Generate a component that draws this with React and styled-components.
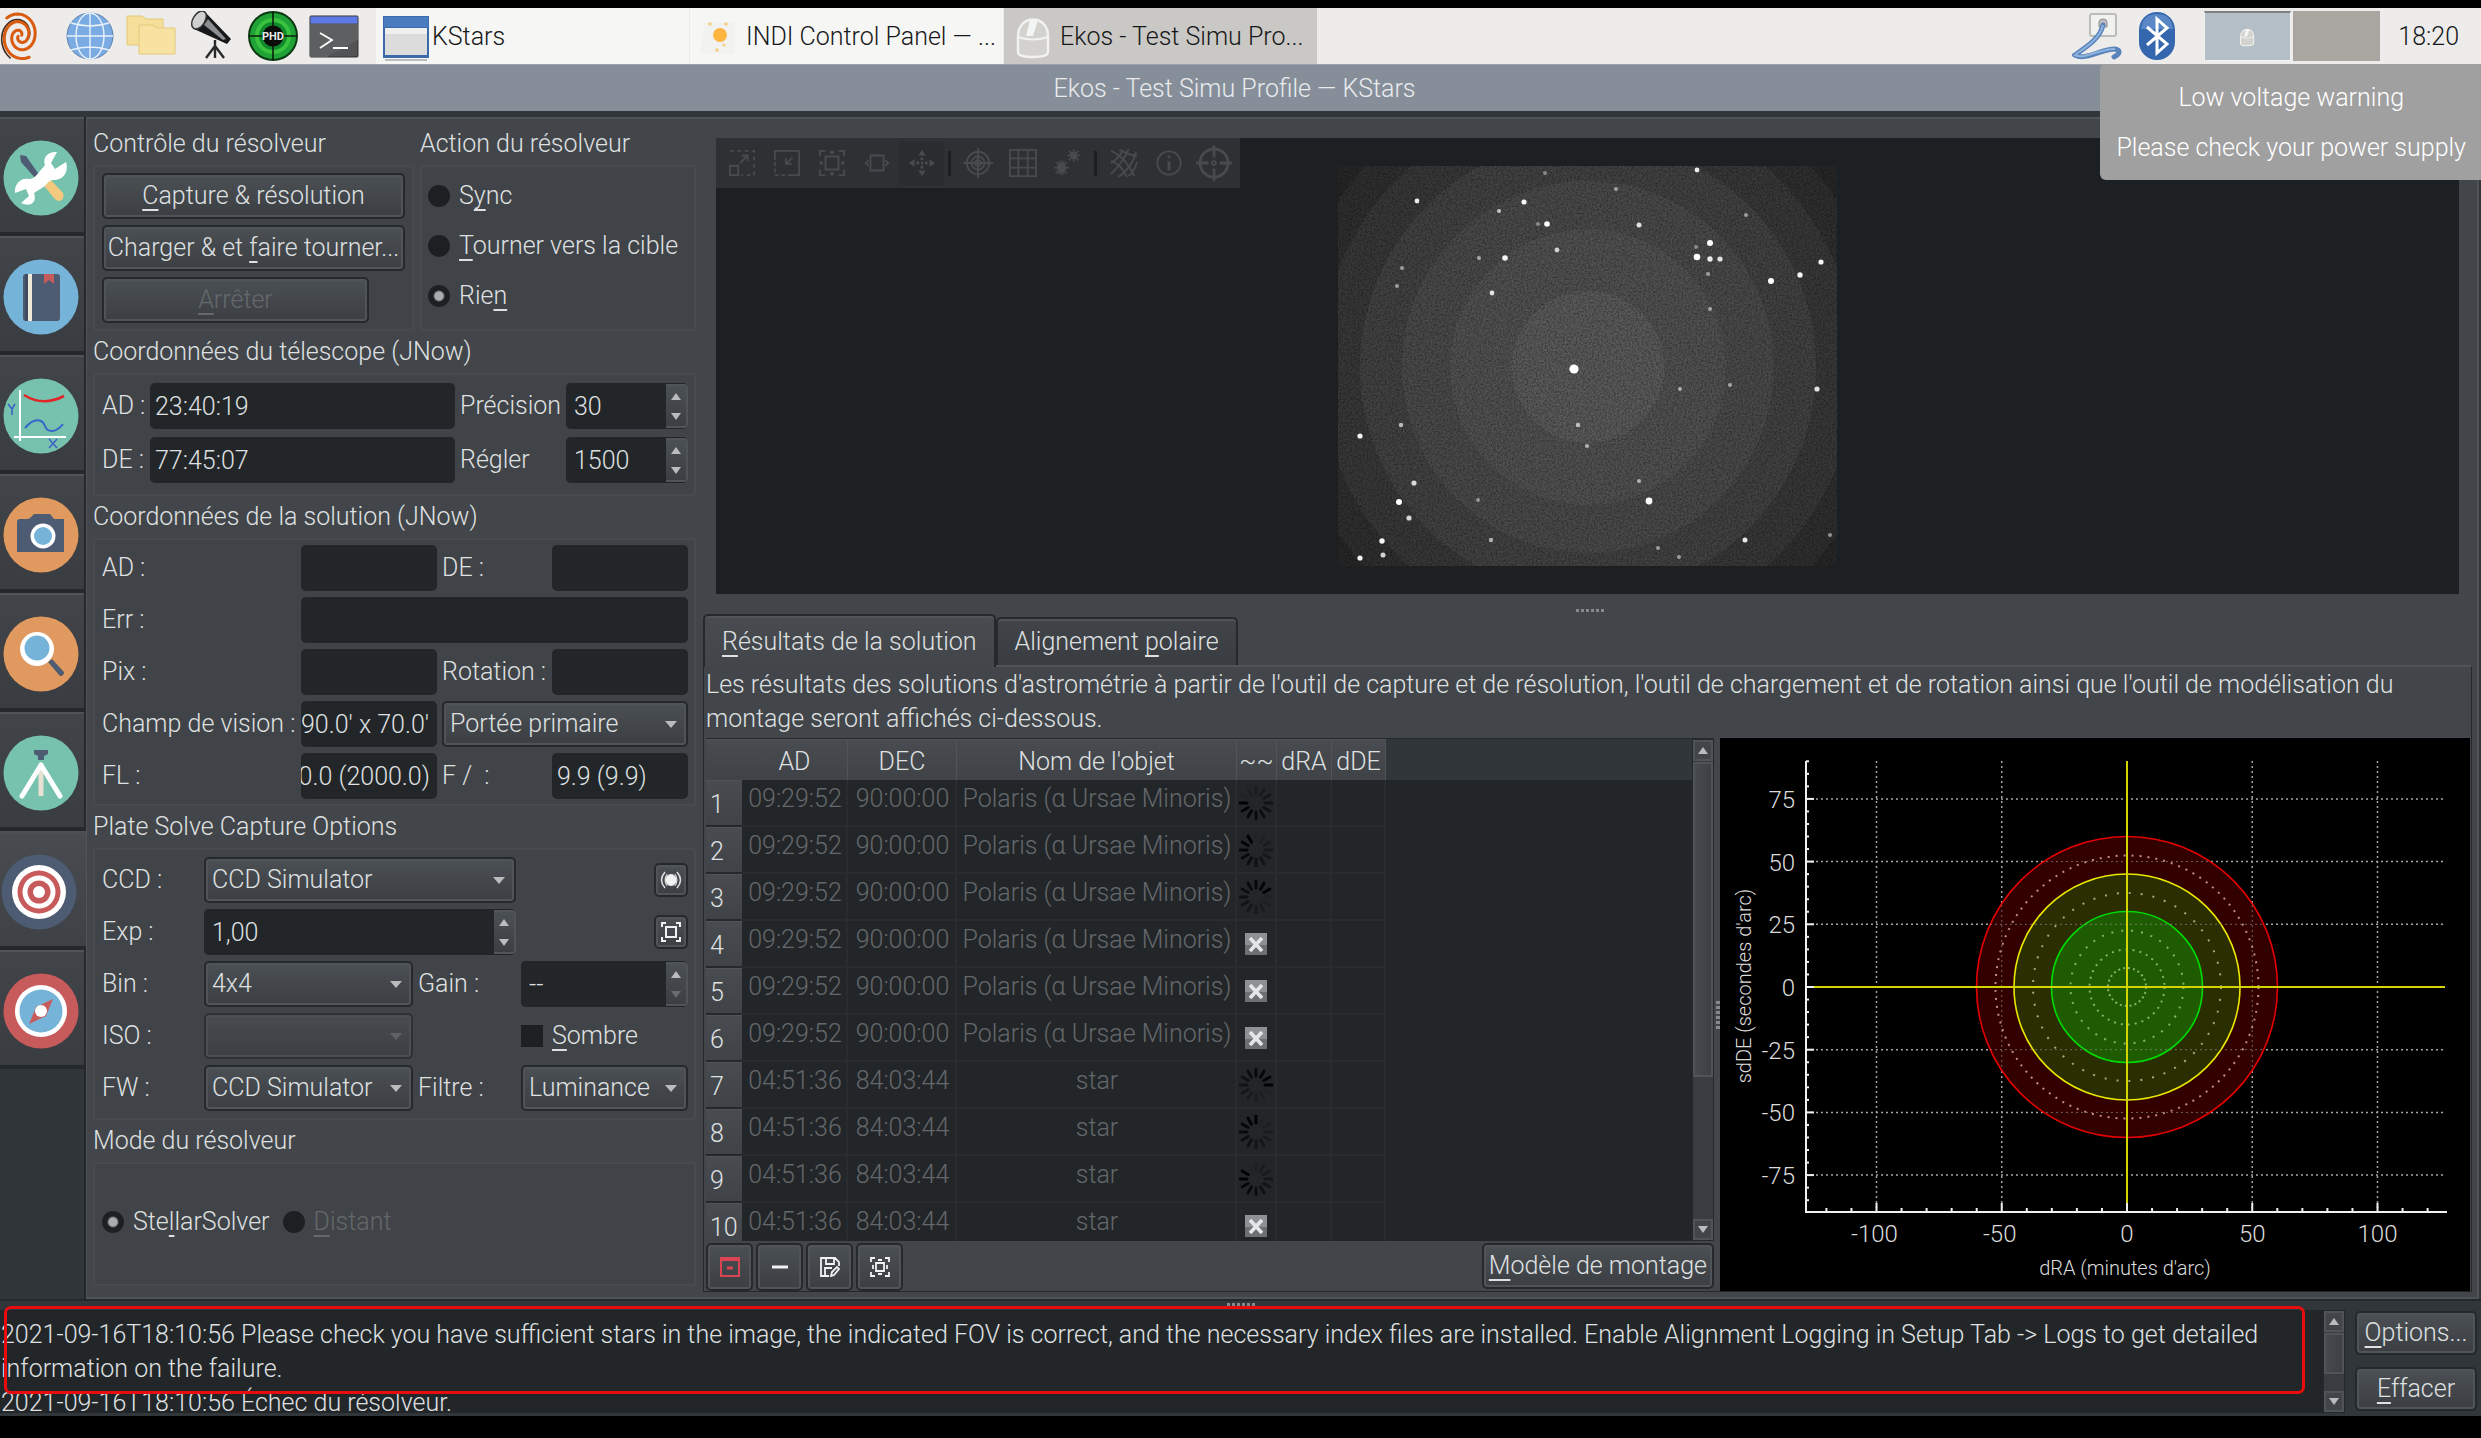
import React, { useEffect, useRef } from "react";
import styled, { createGlobalStyle, css } from "styled-components";

const COLORS = {
	window: "#31363b",
	panel: "#424549",
	field: "#232629",
	edge: "#26292c",
	light: "#505458",
	text: "#dfe0e1",
	dim: "#64686b",
};

const LOG_LINES = [
	"2021-09-16T18:10:56 Please check you have sufficient stars in the image, the indicated FOV is correct, and the necessary index files are installed. Enable Alignment Logging in Setup Tab -> Logs to get detailed information on the failure.",
	"2021-09-16T18:10:56 Échec du résolveur.",
];

// state: clock angle of the darkest spinner bar, or "failed"
const POLARIS = ["09:29:52", "90:00:00", "Polaris (α Ursae Minoris)"];
const STAR = ["04:51:36", "84:03:44", "star"];
const SOLUTIONS = [
	{ cells: POLARIS, state: 270 },
	{ cells: POLARIS, state: 330 },
	{ cells: POLARIS, state: 60 },
	{ cells: POLARIS, state: "failed" },
	{ cells: POLARIS, state: "failed" },
	{ cells: POLARIS, state: "failed" },
	{ cells: STAR, state: 90 },
	{ cells: STAR, state: 0 },
	{ cells: STAR, state: 300 },
	{ cells: STAR, state: "failed" },
];

// x, y, radius, opacity
const STARS = [
	[207, 7, 2, 0.4], [359, 4, 2.4, 0.9], [278, 23, 2, 0.5], [79, 35, 2.4, 0.9],
	[186, 36, 2.6, 0.95], [161, 45, 2, 0.7], [200, 58, 2, 0.4], [209, 58, 2.8, 1],
	[301, 59, 2.5, 0.85], [408, 49, 2, 0.5], [372, 77, 3, 1], [358, 81, 2, 0.4],
	[359, 91, 3.3, 1], [372, 93, 2.7, 0.9], [382, 93, 2.6, 0.85], [483, 96, 2.6, 0.95],
	[219, 84, 2.4, 0.75], [141, 92, 2, 0.55], [167, 92, 2.8, 0.95], [64, 102, 2, 0.5],
	[59, 120, 2, 0.5], [154, 127, 2.4, 0.85], [370, 108, 2, 0.5], [462, 109, 2.7, 0.95],
	[433, 115, 3, 1], [372, 143, 2, 0.5], [236, 203, 4.6, 1], [342, 223, 2, 0.55],
	[392, 219, 2, 0.55], [479, 223, 2.6, 0.85], [240, 259, 2.2, 0.65], [249, 280, 2, 0.6],
	[63, 259, 2.2, 0.65], [22, 270, 2.6, 0.95], [76, 317, 2.6, 0.8], [61, 336, 3, 1],
	[140, 334, 2, 0.45], [71, 352, 2.6, 0.8], [301, 315, 2, 0.6], [311, 335, 3.4, 1],
	[44, 375, 2.7, 0.95], [45, 389, 2.5, 0.8], [22, 392, 2.6, 0.95], [153, 374, 2.2, 0.6],
	[320, 382, 2, 0.5], [341, 391, 2, 0.5], [407, 374, 2.5, 0.9], [492, 369, 2, 0.5],
];

const HALO = [
	[300, "#2f2f2f"],
	[268, "#383838"],
	[228, "#424242"],
	[186, "#4a4a4a"],
	[138, "#515151"],
	[76, "#5a5a5a"],
];

/* ---------- icons ---------- */

const spiral = (start, turns, reach) =>
	Array.from({ length: 40 }, (_, i) => {
		const t = i / 39;
		const angle = start + t * turns * 2 * Math.PI;
		const r = 2 + reach * t;
		return `${(20 + r * 0.92 * Math.cos(angle)).toFixed(1)},${(25 - r * 1.08 * Math.sin(angle)).toFixed(1)}`;
	}).join(" ");

const SwirlIcon = () => (
	<svg width="44" height="50" viewBox="0 0 44 50" fill="none" strokeLinecap="round">
		<polyline points={spiral(3.6, 1.1, 21)} stroke="#3b2a22" strokeWidth="1.600" />
		<polyline points={spiral(0.4, 1.3, 20)} stroke="#d95b10" strokeWidth="3" />
		<polyline points={spiral(3.3, 1.3, 20)} stroke="#d95b10" strokeWidth="3" />
	</svg>
);

const GlobeIcon = () => (
	<svg width="50" height="50" viewBox="0 0 50 50">
		<circle cx="25" cy="25" r="23" fill="#7aabe3" stroke="#5c80ac" />
		<g fill="none" stroke="#e9f2fb" strokeWidth="1.4">
			<path d="M25 2v46M2 25h46M6 12q19 6 38 0M6 39q19-6 38 0" />
			<ellipse cx="25" cy="25" rx="14" ry="23" />
		</g>
	</svg>
);

const FolderIcon = () => (
	<svg width="50" height="50" viewBox="0 0 50 50" stroke="#e2c878">
		<path d="M1 5h15l4 3h17v26H1z" fill="#f6df9b" />
		<path d="M13 14h14l4 3h18v26H13z" fill="#f8e2a2" />
	</svg>
);

const TelescopeIcon = () => (
	<svg width="50" height="50" viewBox="0 0 50 50">
		<path d="M18 1l26 27-4 5L7 18z" fill="#17181a" />
		<path d="M21 8l18 20-3 1-19-15z" fill="#8c8f91" />
		<ellipse cx="12" cy="9" rx="6" ry="10" transform="rotate(32 12 9)" fill="#cfd0cf" stroke="#333" strokeWidth="1.5" />
		<path d="M28 29v8M28 35l-9 12M28 35l9 12M28 37v10" stroke="#2a2a2a" strokeWidth="2.4" fill="none" />
	</svg>
);

const PhdIcon = () => (
	<svg width="50" height="50" viewBox="0 0 50 50">
		<circle cx="25" cy="25" r="24" fill="#1fa336" stroke="#0c3812" strokeWidth="2" />
		<circle cx="25" cy="25" r="18" fill="#39c23e" />
		<circle cx="25" cy="25" r="14" fill="#128a2c" />
		<path d="M25 1v48M1 25h48" stroke="#0b1c0d" strokeWidth="1.6" />
		<circle cx="25" cy="25" r="10.5" fill="#0b0d0b" />
		<text x="25" y="29" fontSize="11" fontWeight="700" fontFamily="Roboto, sans-serif" textAnchor="middle" fill="#e8ece8">PHD</text>
	</svg>
);

const TerminalIcon = () => (
	<svg width="50" height="50" viewBox="0 0 50 50">
		<rect x="1" y="5" width="48" height="41" rx="1" fill="#525354" stroke="#2f3031" />
		<path d="M49 13v16L18 46H1V13z" fill="#5e5f60" />
		<rect x="1.500" y="5.500" width="47" height="7" fill="#5d79e6" />
		<path d="M11 22l12 7-12 8M24 37h15" fill="none" stroke="#fff" strokeWidth="1.8" />
	</svg>
);

const WindowIcon = () => (
	<svg width="50" height="50" viewBox="0 0 50 50">
		<rect x="1" y="4" width="46" height="42" fill="#3b6bab" />
		<rect x="2" y="5" width="44" height="10" fill="#4a7dc0" />
		<rect x="3" y="16" width="42" height="27" fill="#dcdcdc" />
		<rect x="3" y="16" width="42" height="6" fill="#efefef" />
		<path d="M3 48h42" stroke="#b9bbbd" strokeWidth="2" />
	</svg>
);

const IndiIcon = () => (
	<svg width="50" height="50" viewBox="0 0 50 50">
		<path d="M9 10h30v32H3z" fill="#f2f2f0" />
		<ellipse cx="24" cy="23" rx="7" ry="7" fill="#fbb540" />
		<g fill="#f8cf83">
			<circle cx="14" cy="12" r="1.800" />
			<circle cx="30" cy="12" r="1.800" />
			<circle cx="28" cy="33" r="1.600" />
			<circle cx="21" cy="38" r="1.800" />
		</g>
	</svg>
);

const MouseIcon = ({ size = 50 }) => (
	<svg width={size} height={size} viewBox="0 0 50 50">
		<path d="M8 24C8 2 38 2 38 24v16q0 5-15 5T8 40z" fill="#d3d2ce" stroke="#f2f2f1" strokeWidth="2.4" />
		<path d="M8 25q15 5 30 0" fill="none" stroke="#f2f2f1" strokeWidth="2" />
		<path d="M20 8h8l-5 16h-7z" fill="#f4f5f5" />
	</svg>
);

const NetworkIcon = () => (
	<svg width="50" height="50" viewBox="0 0 50 50" fill="none">
		<rect x="18" y="3" width="26" height="22" rx="2" fill="#f1f1ef" stroke="#bcbcb9" strokeWidth="2" />
		<path d="M27 16v-5q0-3 4-3t4 3v5z" fill="#bdbdbb" stroke="#8e8e8c" />
		<path d="M31 14C28 28 14 36 3 44c10 6 26-6 40-6 6 1 5 5-1 8" stroke="#5984bb" strokeWidth="5" strokeLinecap="round" />
		<path d="M31 14C28 28 14 36 3 44c10 5 26-7 40-6" stroke="#8fb3de" strokeWidth="2" />
	</svg>
);

const BluetoothIcon = () => (
	<svg width="38" height="50" viewBox="0 0 38 50">
		<rect x="1" y="1" width="36" height="48" rx="18" fill="#3467ae" />
		<path d="M3 18C4 6 12 3 19 3s15 3 16 15z" fill="#5a88c6" />
		<path d="M9 16l20 17-10 9V8l10 9L9 34" fill="none" stroke="#fff" strokeWidth="3" />
	</svg>
);

const ModuleIcon = ({ bg, children }) => (
	<svg width="76" height="76" viewBox="0 0 76 76">
		<circle cx="38" cy="38" r="37.500" fill={bg} />
		{children}
	</svg>
);

const MODULES = [
	{
		name: "Setup",
		bg: "#77c2ae",
		art: (
			<>
				<path d="M17 15l6 1 14 20-4 3-15-17z" fill="#4d5b73" />
				<path d="M38 42l7-5 15 16q2 5-3 8-4 0-6-3z" fill="#f3ca7d" />
				<path d="M54 12l-6 11 4 6 11-7c3 9-2 18-12 18-4 0-6 2-9 6L31 53c3 8-2 15-13 10l8-7-3-7-11 4c-1-8 5-16 14-14 5 0 7-3 16-14-3-8 4-14 12-13z" fill="#fff" />
			</>
		),
	},
	{
		name: "Scheduler",
		bg: "#76b3d8",
		art: (
			<>
				<rect x="20" y="15" width="37" height="47" rx="3" fill="#4d5b73" />
				<path d="M22 15h3v47h-3z" fill="#3f4b60" />
				<path d="M25 15h4v47h-4z" fill="#eee9d6" />
				<path d="M41 15h10v10l-5-4-5 4z" fill="#c75b5c" />
			</>
		),
	},
	{
		name: "Analyze",
		bg: "#77c2ae",
		art: (
			<g fill="none">
				<path d="M17 12v51M11 59h52" stroke="#fff" strokeWidth="2" />
				<path d="M21 17q19 12 40 1" stroke="#e02626" strokeWidth="2.6" />
				<path d="M22 50c10-12 18-8 20-2s10 8 18-2" stroke="#3565c8" strokeWidth="2" />
				<path d="M5 26l4 5 3-5M9 31v6M46 61l8 9M54 61l-8 9" stroke="#3f63c4" strokeWidth="1.6" />
			</g>
		),
	},
	{
		name: "Capture",
		bg: "#e0995e",
		art: (
			<>
				<path d="M14 25q0-3 3-3h7q3 0 4-2l3-3h16l4 5h10v33H14z" fill="#4d5b73" />
				<circle cx="40" cy="39" r="12.500" fill="#fff" />
				<circle cx="40" cy="39" r="9" fill="#76b3d8" />
			</>
		),
	},
	{
		name: "Focus",
		bg: "#e0995e",
		art: (
			<>
				<path d="M45 46l4-3 12 13q0 4-4 4z" fill="#4d5b73" />
				<circle cx="34" cy="33" r="17" fill="#fff" />
				<circle cx="34" cy="32" r="12.500" fill="#76b3d8" />
			</>
		),
	},
	{
		name: "Mount",
		bg: "#77c2ae",
		art: (
			<>
				<path d="M31 15h14v4l-4 2v4h-6v-4l-4-2z" fill="#4d5b73" />
				<path d="M38 35v26" stroke="#e6e1d3" strokeWidth="5" />
				<path d="M19 61l19-31 19 31" fill="none" stroke="#fff" strokeWidth="5" strokeLinecap="round" strokeLinejoin="round" />
			</>
		),
	},
	{
		name: "Align",
		bg: "#4d5b73",
		art: (
			<>
				<circle cx="38" cy="38" r="27" fill="#fff" />
				<circle cx="38" cy="38" r="21.500" fill="#c75b5c" />
				<circle cx="38" cy="38" r="16.500" fill="#fff" />
				<circle cx="38" cy="38" r="11.500" fill="#c75b5c" />
				<circle cx="38" cy="38" r="6" fill="#fff" />
			</>
		),
	},
	{
		name: "Guide",
		bg: "#c75b5c",
		art: (
			<>
				<circle cx="38" cy="38" r="26" fill="#fff" />
				<circle cx="38" cy="38" r="21.500" fill="#76b3d8" />
				<path d="M50 26l-7 17-17 8 7-17z" fill="#c75b5c" />
				<circle cx="38" cy="38" r="6" fill="#fff" />
			</>
		),
	},
];

const TOOL_ART = {
	"Zoom in": (
		<>
			<path d="M2 2h26v26H14" strokeDasharray="4 4" />
			<path d="M2 18h9v10H2zM13 15l8-8M15 7h6v6" />
		</>
	),
	"Zoom out": (
		<>
			<path d="M2 12V2h26v26H16" />
			<path d="M2 14v14h12" strokeDasharray="4 3" />
			<path d="M21 9l-7 7M14 10v6h6" />
		</>
	),
	"Default zoom": (
		<>
			<path d="M2 8V2h6M22 2h6v6M28 22v6h-6M8 28H2v-6M8 8h14v14H8z" />
			<path d="M15 2v3M15 25v3M2 15h3M25 15h3" strokeWidth="4" />
		</>
	),
	"Zoom to fit": (
		<>
			<path d="M8 7h14v16H8z" />
			<path d="M6 12l-3 3 3 3M24 12l3 3-3 3" />
		</>
	),
	Pan: (
		<>
			<path d="M15 1l4 6h-8zM15 29l4-6h-8zM1 15l6-4v8zM29 15l-6-4v8z" fill="currentColor" stroke="none" />
			<path d="M9 15h3M14 15h2M18 15h3M15 9v3M15 18v3" strokeWidth="3" />
		</>
	),
	Crosshairs: (
		<>
			<circle cx="15" cy="15" r="12" />
			<circle cx="15" cy="15" r="7" />
			<circle cx="15" cy="15" r="3" />
			<path d="M15-1v32M-1 15h32" />
		</>
	),
	Grid: <path d="M1 1h28v28H1zM10 1v28M20 1v28M1 10h28M1 20h28" />,
	Stars: (
		<>
			<circle cx="8" cy="20" r="5" fill="currentColor" stroke="none" />
			<path d="M8 12v16M0 20h16M2 14l12 12M14 14L2 26M5 13l6 14M11 13L5 27" strokeWidth="1.600" />
			<circle cx="21" cy="7" r="4" fill="currentColor" stroke="none" />
			<path d="M21 0v14M14 7h14M16 2l10 10M26 2L16 12" strokeWidth="1.600" />
		</>
	),
	"Equatorial grid": <path d="M1 2Q16 8 26 29M1 13Q12 16 18 30M10 1Q20 6 29 8M20 0Q14 14 1 27M28 3Q24 20 9 30M14 1Q10 10 1 15M29 14Q26 24 20 29" />,
	Objects: (
		<>
			<circle cx="15" cy="15" r="12.500" />
			<path d="M15 13v10M15 7v3" strokeWidth="3" />
		</>
	),
	Center: (
		<>
			<circle cx="15" cy="15" r="15" strokeWidth="3" />
			<path d="M15-4v13M15 21v13M-4 15H9M21 15h13" strokeWidth="3" />
			<circle cx="15" cy="15" r="2" />
		</>
	),
};

const VIEW_TOOLS = [
	"Zoom in", "Zoom out", "Default zoom", "Zoom to fit", "Pan", null,
	"Crosshairs", "Grid", "Stars", null,
	"Equatorial grid", "Objects", "Center",
];

const ToolIcon = ({ name }) => (
	<svg width="28" height="28" viewBox="0 0 30 30" fill="none" stroke="currentColor" strokeWidth="2" overflow="visible">
		{TOOL_ART[name]}
	</svg>
);

const Spinner = ({ head }) => (
	<svg width="34" height="34" viewBox="-17 -17 34 34" role="img" aria-label="En cours">
		{Array.from({ length: 12 }, (_, i) => (
			<path
				key={i}
				d="M0-9v-7"
				stroke="#000"
				strokeWidth="3"
				strokeLinecap="round"
				opacity={1 - i * 0.085}
				transform={`rotate(${head - i * 30})`}
			/>
		))}
	</svg>
);

const FailedIcon = () => (
	<svg width="22" height="22" viewBox="0 0 22 22" role="img" aria-label="Échec">
		<rect width="22" height="22" fill="#8d9195" />
		<rect y="12" width="22" height="10" fill="#6c7073" />
		<path d="M5 5l12 13M17 5L5 18" stroke="#e4e6e8" strokeWidth="3.600" />
	</svg>
);

/* ---------- shared controls ---------- */

const GlobalStyle = createGlobalStyle`
	* { box-sizing: border-box; }

	body {
		margin: 0;
		background: #000;
		color: ${COLORS.text};
		font: 300 25px/34px Roboto, "Liberation Sans", sans-serif;
	}

	button, input, select {
		margin: 0;
		font: inherit;
		color: inherit;
	}

	svg { display: block; flex: none; }
`;

const Key = styled.u`
	text-decoration-thickness: 2px;
	text-underline-offset: 5px;
	text-decoration-skip-ink: none;
`;

const raised = css`
	border: 2px solid ${COLORS.edge};
	border-radius: 5px;
	background: linear-gradient(#4b5054, #3b3e43);
	box-shadow: inset 0 0 0 2px ${COLORS.light};
`;

const Button = styled.button`
	${raised}
	height: ${(props) => props.$height || 46}px;
	width: ${(props) => (props.$width ? `${props.$width}px` : "auto")};
	padding: 0 5px;
	display: flex;
	align-items: center;
	justify-content: center;
	white-space: nowrap;

	&:disabled {
		color: ${COLORS.dim};
	}
`;

const Field = styled.input`
	width: 100%;
	min-width: 0;
	height: 46px;
	padding: 0 5px;
	border: 0;
	border-radius: 5px;
	outline: 0;
	background: ${COLORS.field};
	grid-column: ${(props) => props.$column || "auto"};
`;

const ClippedField = styled(Field)`
	padding: 0 7px 0 0;
`;

const TailField = (props) => {
	const ref = useRef(null);

	useEffect(() => {
		ref.current.scrollLeft = ref.current.scrollWidth;
	}, []);

	return <ClippedField ref={ref} {...props} />;
};

const SelectWrapper = styled.span`
	position: relative;
	display: block;
	grid-column: ${(props) => props.$column || "auto"};

	&::after {
		content: "";
		position: absolute;
		right: 11px;
		top: 20px;
		border: 6px solid transparent;
		border-top: 7px solid #b9bbbd;
		opacity: ${(props) => (props.$disabled ? 0.25 : 1)};
		pointer-events: none;
	}

	select {
		${raised}
		appearance: none;
		width: 100%;
		height: 46px;
		padding: 0 24px 0 6px;
	}
`;

const Select = ({ id, value, column, disabled }) => (
	<SelectWrapper $column={column} $disabled={disabled}>
		<select id={id} disabled={disabled} defaultValue={value}>
			<option>{value}</option>
		</select>
	</SelectWrapper>
);

const SpinWrapper = styled.span`
	display: flex;
	height: 46px;
	border-radius: 5px;
	background: ${COLORS.field};
	grid-column: ${(props) => props.$column || "auto"};

	${Field} {
		flex: 1;
		padding-left: 8px;
	}
`;

const SpinButtons = styled.span`
	width: 22px;
	display: flex;
	flex-direction: column;
	margin: 1px 0;
	border: 2px solid ${COLORS.light};
	border-left: 0;
	border-radius: 0 4px 4px 0;
	background: linear-gradient(#4b5054, #3b3e43);

	button {
		flex: 1;
		padding: 0;
		border: 0;
		background: none;
		display: grid;
		place-items: center;
	}

	button:disabled {
		opacity: 0.35;
	}
`;

const Arrow = styled.i`
	border: 5px solid transparent;
	${(props) =>
		props.$up
			? "border-top: 0; border-bottom: 7px solid #b9bbbd;"
			: "border-bottom: 0; border-top: 7px solid #b9bbbd;"}
`;

const Spin = ({ id, value, column, downDisabled }) => (
	<SpinWrapper $column={column}>
		<Field id={id} defaultValue={value} />
		<SpinButtons>
			<button type="button" aria-label="Augmenter">
				<Arrow $up />
			</button>
			<button type="button" aria-label="Diminuer" disabled={downDisabled}>
				<Arrow />
			</button>
		</SpinButtons>
	</SpinWrapper>
);

const ChoiceLabel = styled.label`
	display: flex;
	align-items: center;
	gap: 9px;
	height: 50px;
	color: ${(props) => (props.$disabled ? COLORS.dim : "inherit")};
	grid-column: ${(props) => props.$column || "auto"};

	input {
		appearance: none;
		width: 22px;
		height: 22px;
		background: #1d2023;
	}

	input[type="radio"] {
		border-radius: 50%;
	}

	input:checked {
		background: radial-gradient(circle, #a9abad 0 4px, #1d2023 6px);
	}
`;

const ScrollTrack = styled.div`
	width: 22px;
	display: flex;
	flex-direction: column;
	gap: 1px;
	background: #393c40;
	border: 1px solid ${COLORS.edge};

	button {
		height: 21px;
		padding: 0;
		border: 2px solid ${COLORS.light};
		background: #414448;
		display: grid;
		place-items: center;
	}
`;

const Thumb = styled.div`
	flex: ${(props) => props.$share} 0 0;
	border: 2px solid ${COLORS.light};
	background: linear-gradient(90deg, #46494d, #3d4044);
`;

const Trough = styled.div`
	flex: ${(props) => props.$share} 0 0;
`;

const ScrollBar = ({ thumb }) => (
	<ScrollTrack>
		<button type="button" aria-label="Défiler vers le haut">
			<Arrow $up />
		</button>
		<Thumb $share={thumb} />
		<Trough $share={100 - thumb} />
		<button type="button" aria-label="Défiler vers le bas">
			<Arrow />
		</button>
	</ScrollTrack>
);

const Grip = styled.div`
	width: ${(props) => (props.$vertical ? 4 : 28)}px;
	height: ${(props) => (props.$vertical ? 28 : 3)}px;
	background: repeating-linear-gradient(
		${(props) => (props.$vertical ? "180deg" : "90deg")},
		#86898c 0 3px,
		transparent 3px 5px
	);
`;

/* ---------- desktop bar ---------- */

const Desktop = styled.div`
	padding-top: 8px;
	padding-bottom: 26px;
	position: relative;
`;

const TaskBar = styled.header`
	height: 56px;
	display: flex;
	align-items: center;
	background: #edecea;
	color: #16181a;
`;

const Launchers = styled.nav`
	display: flex;
	align-items: center;
	gap: 11px;
	padding-right: 17px;

	a:first-child {
		margin-right: 10px;
	}
`;

const Task = styled.button`
	width: 314px;
	height: 100%;
	padding: 2px 4px 0 6px;
	display: flex;
	align-items: center;
	border: 0;
	border-right: 1px solid #ebebe8;
	white-space: nowrap;
	background: ${(props) => (props.$active ? "#cac8c4" : "#f6f6f4")};
`;

const Tray = styled.div`
	margin-left: auto;
	padding-right: 22px;
	display: flex;
	align-items: center;
	gap: 16px;
`;

const Pager = styled.div`
	margin: 0 2px 0 12px;
	display: flex;
	gap: 2px;
`;

const Page = styled.div`
	width: 87px;
	height: 50px;
	display: grid;
	place-items: center;
	background: ${(props) => (props.$active ? "#b4bec6" : "#a9a5a1")};
	border: 1px solid ${(props) => (props.$active ? "#f2f2f1" : "#a9a5a1")};
	border-top: 2px solid ${(props) => (props.$active ? "#7f8183" : "#a9a5a1")};
`;

const Clock = styled.time`
	padding-top: 2px;
`;

const Notification = styled.div`
	position: absolute;
	top: 64px;
	right: 0;
	padding: 9px 15px 7px 16px;
	border-radius: 6px 0 0 6px;
	background: #a0a0a0;
	color: #fff;
	text-align: center;
	line-height: 50px;

	p {
		margin: 0;
	}
`;

const TitleBar = styled.div`
	height: 47px;
	display: flex;
	align-items: center;
	justify-content: center;
	padding: 2px 12px 0 0;
	background: #868f99;
	border-top: 1px solid #9aa3ab;
	color: #e9ebed;
`;

/* ---------- ekos window ---------- */

const Window = styled.main`
	background: ${COLORS.window};
	padding-top: 6px;
`;

const Body = styled.div`
	display: flex;
	padding-right: 2px;
`;

const Modules = styled.nav`
	width: 86px;
	border-right: 2px solid ${COLORS.edge};
`;

const ModuleTab = styled.button`
	display: flex;
	align-items: flex-start;
	width: ${(props) => (props.$active ? 86 : 84)}px;
	height: 119px;
	padding: ${(props) => (props.$active ? "21px 0 0 1px" : "21px 0 0 3px")};
	border: 0;
	border-top: 2px solid ${(props) => (props.$active ? "#4c5054" : COLORS.light)};
	border-bottom: 4px solid ${COLORS.edge};
	background: ${(props) =>
		props.$active ? "linear-gradient(#484c50, #3e4145)" : "linear-gradient(#414448, #393c40)"};
`;

const Panel = styled.div`
	flex: 1;
	min-width: 0;
	display: flex;
	gap: 7px;
	padding: 0 5px 5px 6px;
	border: 2px solid ${COLORS.light};
	border-left-width: 1px;
	background: ${COLORS.panel};
`;

const Controls = styled.section`
	width: 603px;
	flex: none;
	padding-top: 4px;
`;

const GroupTitle = styled.h2`
	margin: 0;
	font: inherit;
	line-height: 42px;
`;

const Group = styled.div`
	border: 2px solid #474a4e;
	border-radius: 4px;
	background: #404347;
	padding: ${(props) => props.$padding};
`;

const GroupPair = styled.div`
	display: grid;
	grid-template-columns: 321px 1fr;
	gap: 6px;
`;

const ButtonStack = styled.div`
	display: grid;
	gap: 6px;
`;

const FormGrid = styled.div`
	display: grid;
	grid-template-columns: ${(props) => props.$columns};
	grid-auto-rows: 46px;
	row-gap: ${(props) => props.$gap || 6}px;
	align-items: center;

	label {
		white-space: pre;
	}
`;

const SquareButton = styled(Button)`
	width: 34px;
	height: 34px;
	padding: 0;
	justify-self: end;
	grid-column: -2;
`;

const SolverModes = styled(Group)`
	height: 124px;
	display: flex;
	align-items: center;
	gap: 13px;
`;

const Results = styled.section`
	flex: 1;
	min-width: 0;
	display: flex;
	flex-direction: column;
`;

const SkyView = styled.div`
	position: relative;
	margin: 19px 13px 0;
	padding: 28px;
	display: flex;
	justify-content: center;
	background: #1c2023;
`;

const ViewTools = styled.div`
	position: absolute;
	top: 0;
	left: 0;
	height: 50px;
	padding: 0 4px 0 3px;
	display: flex;
	align-items: center;
	background: #2d3134;
	color: #484b4e;

	button {
		width: 45px;
		height: 44px;
		padding: 0;
		border: 0;
		background: none;
		display: grid;
		place-items: center;
	}

	button[aria-pressed="true"] {
		background: #2a2d30;
	}

	i {
		width: 3px;
		height: 25px;
		margin: 0 4px;
		background: #1c1f22;
	}
`;

const Splitter = styled.div`
	height: 20px;
	padding-top: 15px;
	padding-left: 4px;
	display: flex;
	justify-content: center;
`;

const Tabs = styled.div`
	display: flex;
	align-items: flex-end;
	height: 51px;
`;

const Tab = styled.button`
	height: ${(props) => (props.$active ? 53 : 48)}px;
	margin-bottom: ${(props) => (props.$active ? -2 : 0)}px;
	padding: 0 17px;
	border: 2px solid ${COLORS.edge};
	border-bottom: 0;
	border-radius: 5px 5px 0 0;
	background: ${(props) =>
		props.$active ? "linear-gradient(#484c50, #424549)" : "linear-gradient(#414448, #393c40)"};
	box-shadow: inset 0 2px 0 ${COLORS.light};
	position: relative;
`;

const TabPane = styled.div`
	flex: 1;
	display: flex;
	flex-direction: column;
	border: 1px solid ${COLORS.edge};
	border-top: 2px solid ${COLORS.light};
	padding: 0 1px 0 2px;
`;

const Intro = styled.p`
	margin: 0;
	padding: 1px 0 2px;
`;

const Split = styled.div`
	flex: 1;
	display: flex;
`;

const Solutions = styled.div`
	flex: 1;
	min-width: 0;
	display: flex;
	flex-direction: column;
`;

const TableFrame = styled.div`
	height: 503px;
	display: flex;
	justify-content: space-between;
	overflow: hidden;
	border-top: 1px solid ${COLORS.edge};
	background: linear-gradient(${COLORS.window} 41px, ${COLORS.field} 41px);
`;

const Table = styled.table`
	border-collapse: separate;
	border-spacing: 0;
	table-layout: fixed;
	width: 680px;
	align-self: flex-start;

	th {
		padding: 0;
		font-weight: inherit;
		background: linear-gradient(#484b4f, #3f4246);
		border: 0;
		border-top: 1px solid ${COLORS.light};
		white-space: nowrap;
	}

	thead th {
		height: 41px;
		padding-top: 3px;
		border-right: 1px solid ${COLORS.light};
	}

	thead th:first-child {
		border-right: 0;
	}

	tbody th {
		height: 47px;
		padding: 4px 0 0 4px;
		text-align: left;
		border-bottom: 2px solid ${COLORS.edge};
	}

	td {
		height: 47px;
		padding: 0 0 8px 2px;
		text-align: center;
		color: ${COLORS.dim};
		white-space: nowrap;
		border-right: 2px solid #292c2f;
		border-bottom: 2px solid #292c2f;
	}

	td svg {
		margin: 0 auto;
	}

	td:nth-child(5) {
		padding: 0;
	}
`;

const Actions = styled.div`
	display: flex;
	gap: 3px;
	padding-top: 2px;

	button:last-child {
		margin-left: auto;
	}
`;

const GripColumn = styled.div`
	width: 6px;
	display: flex;
	align-items: center;
	justify-content: flex-end;
`;

const Plot = styled.svg`
	width: 750px;
	background: #000;
`;

/* ---------- log ---------- */

const Footer = styled.footer`
	position: relative;
	display: flex;
	padding: 9px 4px 3px 0;
	border-top: 2px solid ${COLORS.edge};
`;

const FooterGrip = styled.div`
	position: absolute;
	top: 2px;
	left: 50%;
	margin-left: -14px;
`;

const Log = styled.div`
	flex: 1;
	height: 103px;
	overflow: hidden;
	padding: 8px 20px 0 1px;
	background: ${COLORS.field};

	p {
		margin: 0;
	}
`;

const Highlight = styled.div`
	position: absolute;
	top: 5px;
	left: 4px;
	right: 176px;
	height: 88px;
	border: 3px solid #e80c0c;
	border-radius: 7px;
	pointer-events: none;
`;

const FooterButtons = styled.div`
	margin-left: 10px;
	padding-top: 1px;
	display: flex;
	flex-direction: column;
	gap: 12px;
`;

/* ---------- drawings ---------- */

const StarField = () => (
	<svg width="499" height="400" viewBox="0 0 499 400" role="img" aria-label="Champ d'étoiles">
		<defs>
			<filter id="grain" x="0" y="0" width="100%" height="100%">
				<feTurbulence type="fractalNoise" baseFrequency="0.55" numOctaves="2" seed="4" />
				<feColorMatrix values="0 0 0 0 0  0 0 0 0 0  0 0 0 0 0  1.8 0 0 0 -0.62" />
			</filter>
			<filter id="glow">
				<feGaussianBlur stdDeviation="0.6" />
			</filter>
		</defs>
		<rect width="499" height="400" fill="#272727" />
		{HALO.map(([r, fill]) => (
			<circle key={r} cx="250" cy="201" r={r} fill={fill} />
		))}
		<rect width="499" height="400" filter="url(#grain)" opacity="0.42" />
		<g fill="#fff" filter="url(#glow)">
			{STARS.map(([x, y, r, o]) => (
				<circle key={`${x}-${y}`} cx={x} cy={y} r={r} opacity={o} />
			))}
		</g>
	</svg>
);

const px = (v) => 407 + v * 2.505;
const py = (v) => 248 - v * 2.508;
const range = (from, to, step) =>
	Array.from({ length: Math.floor((to - from) / step) + 1 }, (_, i) => from + i * step);

const ErrorPlot = () => (
	<Plot viewBox="0 -1 750 553" fill="#dcdcdc" fontSize="24">
		<g stroke="#a5a5a5" strokeWidth="1.500" strokeDasharray="2 3">
			{range(-100, 100, 50).map((v) => (
				<path key={v} d={`M${px(v)} 22V473`} />
			))}
			{range(-75, 75, 25).map((v) => (
				<path key={v} d={`M86 ${py(v)}H725`} />
			))}
		</g>
		<circle cx="407" cy="248" r="150.500" fill="#330000" stroke="#e30000" strokeWidth="1.600" />
		<circle cx="407" cy="248" r="113" fill="#2a2e00" stroke="#e8e800" strokeWidth="1.600" />
		<circle cx="407" cy="248" r="75.500" fill="#1f5b00" stroke="#00dc00" strokeWidth="1.600" />
		<g fill="none" strokeWidth="2">
			<circle cx="407" cy="248" r="131.500" stroke="#c08a8a" strokeDasharray="2 6" />
			<circle cx="407" cy="248" r="94" stroke="#a5a77a" strokeDasharray="2 10" />
			<circle cx="407" cy="248" r="56.500" stroke="#86b06e" strokeDasharray="2 8" />
			<circle cx="407" cy="248" r="37.500" stroke="#86b06e" strokeDasharray="2 5" />
			<circle cx="407" cy="248" r="19" stroke="#86b06e" strokeDasharray="2 3" />
		</g>
		<g stroke="#8c8c8c" strokeWidth="1" strokeDasharray="2 3" opacity="0.7">
			{[-50, 50].map((v) => (
				<path key={v} d={`M${px(v)} 166V330M326 ${py(v)}H488`} />
			))}
			{[-25, 25].map((v) => (
				<path key={v} d={`M270 ${py(v)}H544`} />
			))}
		</g>
		<path d="M86 248H725M407 22V466" stroke="#d4d400" strokeWidth="2" />
		<g stroke="#f0f0f0" strokeWidth="2" fill="none">
			<path d="M86 22V473H727" />
			{range(-120, 120, 10).map((v) => (
				<path key={v} d={`M${px(v)} 473v${v % 50 ? -4 : -9}`} />
			))}
			{range(-85, 90, 5).map((v) => (
				<path key={v} d={`M86 ${py(v)}h${v % 25 ? 3 : 8}`} />
			))}
		</g>
		<g textAnchor="middle">
			{range(-100, 100, 50).map((v) => (
				<text key={v} x={v < 0 ? px(v) - 2 : px(v)} y="503">{v}</text>
			))}
		</g>
		<g textAnchor="end">
			{range(-75, 75, 25).map((v) => (
				<text key={v} x="75" y={py(v) + 9}>{v}</text>
			))}
		</g>
		<g textAnchor="middle" fontSize="20">
			<text x="405" y="536">dRA (minutes d'arc)</text>
			<text transform="translate(31 247) rotate(-90)">sdDE (secondes d'arc)</text>
		</g>
	</Plot>
);

/* ---------- sections ---------- */

const SolverControls = () => (
	<Controls>
		<GroupPair>
			<div>
				<GroupTitle>Contrôle du résolveur</GroupTitle>
				<Group $padding="6px 7px">
					<ButtonStack>
						<Button $width={303}><span><Key>C</Key>apture & résolution</span></Button>
						<Button $width={303}><span>Charger & et <Key>f</Key>aire tourner...</span></Button>
						<Button $width={267} disabled><span><Key>A</Key>rrêter</span></Button>
					</ButtonStack>
				</Group>
			</div>
			<div>
				<GroupTitle>Action du résolveur</GroupTitle>
				<Group $padding="4px 6px 8px">
					<ChoiceLabel>
						<input type="radio" name="action" />
						<span>S<Key>y</Key>nc</span>
					</ChoiceLabel>
					<ChoiceLabel>
						<input type="radio" name="action" />
						<span><Key>T</Key>ourner vers la cible</span>
					</ChoiceLabel>
					<ChoiceLabel>
						<input type="radio" name="action" defaultChecked />
						<span>Rie<Key>n</Key></span>
					</ChoiceLabel>
				</Group>
			</div>
		</GroupPair>

		<GroupTitle>Coordonnées du télescope (JNow)</GroupTitle>
		<Group $padding="8px 6px 11px 7px">
			<FormGrid $columns="48px 1fr 5px 106px 122px" $gap={8}>
				<label htmlFor="scope-ra">AD :</label>
				<Field id="scope-ra" defaultValue="23:40:19" />
				<span />
				<label htmlFor="accuracy">Précision</label>
				<Spin id="accuracy" value="30" />
				<label htmlFor="scope-de">DE :</label>
				<Field id="scope-de" defaultValue="77:45:07" />
				<span />
				<label htmlFor="settle">Régler</label>
				<Spin id="settle" value="1500" />
			</FormGrid>
		</Group>

		<GroupTitle>Coordonnées de la solution (JNow)</GroupTitle>
		<Group $padding="5px 6px 5px 7px">
			<FormGrid $columns="199px 136px 5px 1fr 136px">
				<label htmlFor="sol-ra">AD :</label>
				<Field id="sol-ra" />
				<span />
				<label htmlFor="sol-de">DE :</label>
				<Field id="sol-de" />
				<label htmlFor="sol-err">Err :</label>
				<Field id="sol-err" $column="2 / -1" />
				<label htmlFor="sol-pix">Pix :</label>
				<Field id="sol-pix" />
				<span />
				<label htmlFor="sol-rot">Rotation :</label>
				<Field id="sol-rot" />
				<label htmlFor="fov">Champ de vision :</label>
				<TailField id="fov" defaultValue="90.0' x 70.0'" />
				<span />
				<Select id="scope" value="Portée primaire" column="4 / -1" />
				<label htmlFor="fl">FL :</label>
				<TailField id="fl" defaultValue="2000.0 (2000.0)" />
				<span />
				<label htmlFor="fratio">F /  :</label>
				<Field id="fratio" defaultValue="9.9 (9.9)" />
			</FormGrid>
		</Group>

		<GroupTitle>Plate Solve Capture Options</GroupTitle>
		<Group $padding="7px 6px 7px 7px">
			<FormGrid $columns="102px 209px 5px 98px 5px 1fr">
				<label htmlFor="ccd">CCD :</label>
				<Select id="ccd" value="CCD Simulator" column="2 / 5" />
				<SquareButton aria-label="Aperçu en direct">
					<svg width="24" height="24" viewBox="0 0 24 24" fill="none" stroke="#dfe0e1">
						<circle cx="12" cy="12" r="5.500" fill="#f2f2f2" />
						<path d="M6 4q-7 8 0 16M18 4q7 8 0 16" strokeWidth="1.500" />
						<path d="M8 6q-4 6 0 12M16 6q4 6 0 12" />
					</svg>
				</SquareButton>
				<label htmlFor="exp">Exp :</label>
				<Spin id="exp" value="1,00" column="2 / 5" />
				<SquareButton aria-label="Plein cadre">
					<svg width="22" height="22" viewBox="0 0 22 22" fill="none" stroke="#f0f0f0" strokeWidth="2">
						<path d="M2 6V2h4M16 2h4v4M20 16v4h-4M6 20H2v-4M6 6h10v10H6z" />
					</svg>
				</SquareButton>
				<label htmlFor="bin">Bin :</label>
				<Select id="bin" value="4x4" />
				<span />
				<label htmlFor="gain">Gain :</label>
				<Spin id="gain" value="--" column="6" downDisabled />
				<label htmlFor="iso">ISO :</label>
				<Select id="iso" value="" disabled />
				<ChoiceLabel $column="6">
					<input type="checkbox" />
					<span><Key>S</Key>ombre</span>
				</ChoiceLabel>
				<label htmlFor="fw">FW :</label>
				<Select id="fw" value="CCD Simulator" />
				<span />
				<label htmlFor="filter">Filtre :</label>
				<Select id="filter" value="Luminance" column="6" />
			</FormGrid>
		</Group>

		<GroupTitle>Mode du résolveur</GroupTitle>
		<SolverModes $padding="0 7px 4px">
			<ChoiceLabel>
				<input type="radio" name="mode" defaultChecked />
				<span>Ste<Key>l</Key>larSolver</span>
			</ChoiceLabel>
			<ChoiceLabel $disabled>
				<input type="radio" name="mode" disabled />
				<span><Key>D</Key>istant</span>
			</ChoiceLabel>
		</SolverModes>
	</Controls>
);

const SolutionTable = () => (
	<Table>
		<colgroup>
			<col width="36" />
			<col width="106" />
			<col width="109" />
			<col width="280" />
			<col width="40" />
			<col width="55" />
			<col width="54" />
		</colgroup>
		<thead>
			<tr>
				<th />
				<th>AD</th>
				<th>DEC</th>
				<th>Nom de l'objet</th>
				<th>~~</th>
				<th>dRA</th>
				<th>dDE</th>
			</tr>
		</thead>
		<tbody>
			{SOLUTIONS.map(({ cells, state }, index) => (
				<tr key={index}>
					<th>{index + 1}</th>
					{cells.map((cell) => (
						<td key={cell}>{cell}</td>
					))}
					<td>{state === "failed" ? <FailedIcon /> : <Spinner head={state} />}</td>
					<td />
					<td />
				</tr>
			))}
		</tbody>
	</Table>
);

const SolverResults = () => (
	<Results>
		<SkyView>
			<ViewTools>
				{VIEW_TOOLS.map((name, index) =>
					name ? (
						<button key={name} type="button" aria-label={name} aria-pressed={name === "Pan"}>
							<ToolIcon name={name} />
						</button>
					) : (
						<i key={index} />
					)
				)}
			</ViewTools>
			<StarField />
		</SkyView>
		<Splitter>
			<Grip />
		</Splitter>
		<Tabs role="tablist">
			<Tab role="tab" $active><Key>R</Key>ésultats de la solution</Tab>
			<Tab role="tab">Alignement <Key>p</Key>olaire</Tab>
		</Tabs>
		<TabPane>
			<Intro>
				Les résultats des solutions d'astrométrie à partir de l'outil de capture et de résolution, l'outil de
				chargement et de rotation ainsi que l'outil de modélisation du montage seront affichés ci-dessous.
			</Intro>
			<Split>
				<Solutions>
					<TableFrame>
						<SolutionTable />
						<ScrollBar thumb={69} />
					</TableFrame>
					<Actions>
						<Button $width={47} $height={48} aria-label="Tout effacer">
							<svg width="20" height="20" viewBox="0 0 20 20" fill="none" stroke="#da4453" strokeWidth="2">
								<path d="M1 1h18v18H1zM1 3h18" />
								<path d="M7 11h6" strokeWidth="3" />
							</svg>
						</Button>
						<Button $width={47} $height={48} aria-label="Retirer">
							<svg width="20" height="20" viewBox="0 0 20 20" stroke="#f2f2f2" strokeWidth="3">
								<path d="M2 10h16" />
							</svg>
						</Button>
						<Button $width={47} $height={48} aria-label="Enregistrer">
							<svg width="20" height="20" viewBox="0 0 20 20" fill="none" stroke="#f2f2f2" strokeWidth="1.800">
								<path d="M9 19H1V1h14l4 4v4M6 1v6h8V1M5 19v-8h7" />
								<path d="M11 19l1-4 5-5 2 2-5 6z" />
							</svg>
						</Button>
						<Button $width={47} $height={48} aria-label="Zoom automatique">
							<svg width="20" height="20" viewBox="0 0 20 20" fill="none" stroke="#f2f2f2" strokeWidth="1.800">
								<path d="M1 5V1h4M15 1h4v4M19 15v4h-4M5 19H1v-4M6 6h8v8H6z" />
								<path d="M8 3h4M8 17h4M3 8v4M17 8v4" />
							</svg>
						</Button>
						<Button><span><Key>M</Key>odèle de montage</span></Button>
					</Actions>
				</Solutions>
				<GripColumn>
					<Grip $vertical />
				</GripColumn>
				<ErrorPlot />
			</Split>
		</TabPane>
	</Results>
);

const App = () => {
	return (
		<>
			<GlobalStyle />
			<Desktop>
				<TaskBar>
					<Launchers>
						<a href="#menu" aria-label="Menu"><SwirlIcon /></a>
						<a href="#web" aria-label="Navigateur"><GlobeIcon /></a>
						<a href="#files" aria-label="Fichiers"><FolderIcon /></a>
						<a href="#kstars" aria-label="KStars"><TelescopeIcon /></a>
						<a href="#phd" aria-label="PHD2"><PhdIcon /></a>
						<a href="#terminal" aria-label="Terminal"><TerminalIcon /></a>
					</Launchers>
					<Task><WindowIcon />KStars</Task>
					<Task><IndiIcon />INDI Control Panel — ...</Task>
					<Task $active><MouseIcon />Ekos - Test Simu Pro...</Task>
					<Tray>
						<NetworkIcon />
						<BluetoothIcon />
						<Pager>
							<Page $active><MouseIcon size={22} /></Page>
							<Page />
						</Pager>
						<Clock>18:20</Clock>
					</Tray>
				</TaskBar>
				<TitleBar>Ekos - Test Simu Profile — KStars</TitleBar>
				<Window>
					<Body>
						<Modules>
							{MODULES.map(({ name, bg, art }) => (
								<ModuleTab key={name} type="button" aria-label={name} $active={name === "Align"}>
									<ModuleIcon bg={bg}>{art}</ModuleIcon>
								</ModuleTab>
							))}
						</Modules>
						<Panel>
							<SolverControls />
							<SolverResults />
						</Panel>
					</Body>
					<Footer>
						<FooterGrip>
							<Grip />
						</FooterGrip>
						<Log role="log">
							{LOG_LINES.map((line) => (
								<p key={line}>{line}</p>
							))}
						</Log>
						<ScrollBar thumb={72} />
						<FooterButtons>
							<Button $width={122} $height={44}><span><Key>O</Key>ptions...</span></Button>
							<Button $width={122} $height={44}><span><Key>E</Key>ffacer</span></Button>
						</FooterButtons>
						<Highlight />
					</Footer>
				</Window>
				<Notification role="status">
					<p>Low voltage warning</p>
					<p>Please check your power supply</p>
				</Notification>
			</Desktop>
		</>
	);
};

export default App;
